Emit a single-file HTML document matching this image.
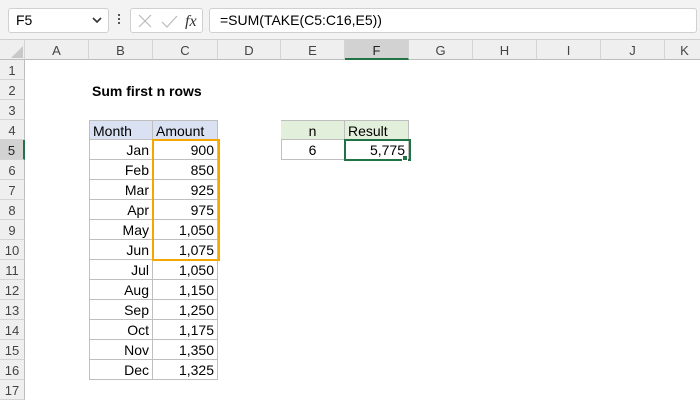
<!DOCTYPE html><html><head><style>
*{margin:0;padding:0;box-sizing:border-box}
body{width:700px;height:400px;overflow:hidden;background:#fff;font-family:"Liberation Sans",Calibri,sans-serif;font-size:14px;color:#000;position:relative}
.a{position:absolute}
.ch{position:absolute;top:40px;height:20px;line-height:21px;text-align:center;color:#444;background:#efefef;border-right:1px solid #d4d4d4;border-bottom:1px solid #bdbdbd;font-size:13px}
.rh{position:absolute;left:0;width:25px;height:20px;line-height:21px;text-align:center;color:#444;background:#efefef;border-bottom:1px solid #d4d4d4;border-right:1px solid #bdbdbd;font-size:13px}
.c{position:absolute;height:20px;line-height:21px;padding:0 3px;border-right:1px solid #bfbfbf;border-bottom:1px solid #bfbfbf;white-space:nowrap}
.r{text-align:right}
</style></head><body>
<div class="a" style="left:0;top:0;width:700px;height:40px;background:#f3f3f3;border-bottom:1px solid #d0d0d0"></div>
<div class="a" style="left:8px;top:8px;width:101px;height:25px;background:#fff;border:1px solid #d0d0d0;border-radius:3px;line-height:23px;padding-left:7px">F5</div>
<svg class="a" style="left:92px;top:16px" width="10" height="8"><path d="M1 2 L5 6 L9 2" stroke="#333" stroke-width="1.6" fill="none"/></svg>
<div class="a" style="left:118px;top:14px;width:2px;height:2px;background:#555;box-shadow:0 4px #555,0 8px #555"></div>
<div class="a" style="left:130px;top:8px;width:73px;height:25px;background:#fff;border:1px solid #d0d0d0;border-radius:3px"></div>
<svg class="a" style="left:136px;top:13px" width="70" height="16"><path d="M3 2 L15 14 M15 2 L3 14" stroke="#bbb" stroke-width="1.2" fill="none"/><path d="M26 9 L31 14 L41 3" stroke="#bbb" stroke-width="1.2" fill="none"/><text x="49" y="13" font-family="Liberation Serif" font-style="italic" font-size="16" fill="#333">fx</text></svg>
<div class="a" style="left:209px;top:8px;width:488px;height:25px;background:#fff;border:1px solid #d0d0d0;border-radius:3px;line-height:23px;padding-left:10px">=SUM(TAKE(C5:C16,E5))</div>
<div class="ch" style="left:0;width:25px;background:#efefef"></div>
<svg class="a" style="left:10px;top:45px" width="14" height="14"><path d="M13 1 L13 13 L1 13 Z" fill="#c8c8c8"/></svg>
<div class="ch" style="left:25px;width:64px">A</div>
<div class="ch" style="left:89px;width:64px">B</div>
<div class="ch" style="left:153px;width:65px">C</div>
<div class="ch" style="left:218px;width:63px">D</div>
<div class="ch" style="left:281px;width:64px">E</div>
<div class="ch" style="left:345px;width:64px;background:#d2d2d2;border-bottom:2px solid #217346;color:#222">F</div>
<div class="ch" style="left:409px;width:64px">G</div>
<div class="ch" style="left:473px;width:64px">H</div>
<div class="ch" style="left:537px;width:64px">I</div>
<div class="ch" style="left:601px;width:64px">J</div>
<div class="ch" style="left:665px;width:40px">K</div>
<div class="rh" style="top:60px">1</div><div class="rh" style="top:80px">2</div><div class="rh" style="top:100px">3</div><div class="rh" style="top:120px">4</div>
<div class="rh" style="top:140px;background:#d2d2d2;border-right:2px solid #217346;color:#222">5</div>
<div class="rh" style="top:160px">6</div><div class="rh" style="top:180px">7</div><div class="rh" style="top:200px">8</div><div class="rh" style="top:220px">9</div><div class="rh" style="top:240px">10</div><div class="rh" style="top:260px">11</div><div class="rh" style="top:280px">12</div><div class="rh" style="top:300px">13</div><div class="rh" style="top:320px">14</div><div class="rh" style="top:340px">15</div><div class="rh" style="top:360px">16</div><div class="rh" style="top:380px">17</div>
<div class="a" style="left:92px;top:81px;line-height:20px;font-weight:bold">Sum first n rows</div>
<div class="a" style="left:89px;top:120px;width:129px;height:260px;border-left:1px solid #bfbfbf;border-top:1px solid #bfbfbf"></div>
<div class="c" style="left:89px;top:120px;width:64px;background:#d9e1f2;border-left:1px solid #bfbfbf;border-top:1px solid #bfbfbf">Month</div>
<div class="c" style="left:153px;top:120px;width:65px;background:#d9e1f2;border-top:1px solid #bfbfbf">Amount</div>
<div class="c r" style="left:89px;top:140px;width:64px">Jan</div><div class="c r" style="left:153px;top:140px;width:65px">900</div>
<div class="c r" style="left:89px;top:160px;width:64px">Feb</div><div class="c r" style="left:153px;top:160px;width:65px">850</div>
<div class="c r" style="left:89px;top:180px;width:64px">Mar</div><div class="c r" style="left:153px;top:180px;width:65px">925</div>
<div class="c r" style="left:89px;top:200px;width:64px">Apr</div><div class="c r" style="left:153px;top:200px;width:65px">975</div>
<div class="c r" style="left:89px;top:220px;width:64px">May</div><div class="c r" style="left:153px;top:220px;width:65px">1,050</div>
<div class="c r" style="left:89px;top:240px;width:64px">Jun</div><div class="c r" style="left:153px;top:240px;width:65px">1,075</div>
<div class="c r" style="left:89px;top:260px;width:64px">Jul</div><div class="c r" style="left:153px;top:260px;width:65px">1,050</div>
<div class="c r" style="left:89px;top:280px;width:64px">Aug</div><div class="c r" style="left:153px;top:280px;width:65px">1,150</div>
<div class="c r" style="left:89px;top:300px;width:64px">Sep</div><div class="c r" style="left:153px;top:300px;width:65px">1,250</div>
<div class="c r" style="left:89px;top:320px;width:64px">Oct</div><div class="c r" style="left:153px;top:320px;width:65px">1,175</div>
<div class="c r" style="left:89px;top:340px;width:64px">Nov</div><div class="c r" style="left:153px;top:340px;width:65px">1,350</div>
<div class="c r" style="left:89px;top:360px;width:64px">Dec</div><div class="c r" style="left:153px;top:360px;width:65px">1,325</div>
<div class="a" style="left:89px;top:140px;width:1px;height:240px;background:#bfbfbf"></div>
<div class="a" style="left:152px;top:139px;width:68px;height:122px;border:2px solid #f4a700"></div>
<div class="a" style="left:281px;top:120px;width:1px;height:40px;background:#bfbfbf"></div>
<div class="c" style="left:281px;top:120px;width:64px;background:#e2efda;border-top:1px solid #bfbfbf;text-align:center">n</div>
<div class="c" style="left:345px;top:120px;width:64px;background:#e2efda;border-top:1px solid #bfbfbf">Result</div>
<div class="c" style="left:281px;top:140px;width:64px;text-align:center">6</div>
<div class="c r" style="left:345px;top:140px;width:64px">5,775</div>
<div class="a" style="left:344px;top:139px;width:67px;height:22px;border:2px solid #217346"></div>
<div class="a" style="left:402px;top:155px;width:6px;height:6px;background:#217346;border:1px solid #fff"></div>
</body></html>
